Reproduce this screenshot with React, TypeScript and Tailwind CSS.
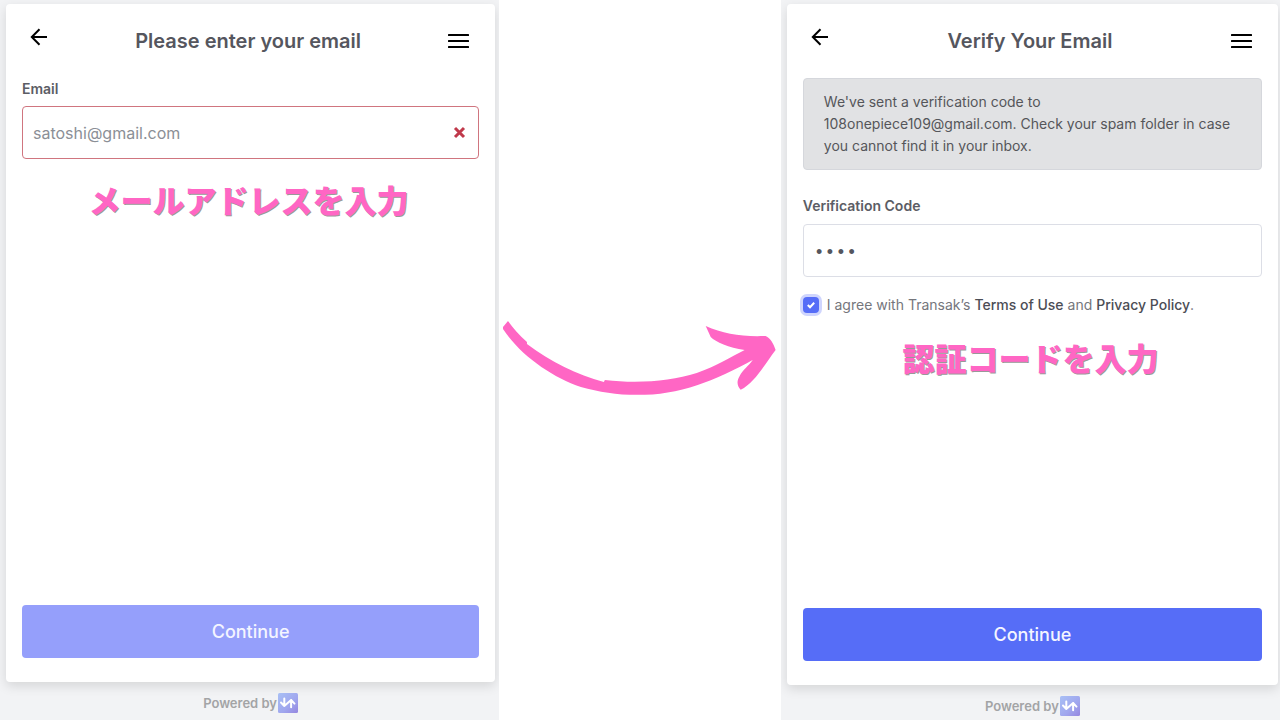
import { ReactNode, useState } from "react";

function BackButton() {
  return (
    <button type="button" aria-label="Back" className="-mt-2 cursor-pointer">
      <svg width="18" height="18" viewBox="0 0 18 18" fill="none" stroke="#000" strokeWidth="2">
        <path d="M17 9H2" />
        <path d="M9.5 1.2 1.8 9l7.7 7.8" />
      </svg>
    </button>
  );
}

function MenuButton() {
  return (
    <button type="button" aria-label="Menu" className="cursor-pointer">
      <svg width="21" height="16" viewBox="0 0 21 16" fill="#000">
        <rect y="1" width="21" height="2" rx="0.5" />
        <rect y="7" width="21" height="2" rx="0.5" />
        <rect y="13" width="21" height="2" rx="0.5" />
      </svg>
    </button>
  );
}

function PoweredBy() {
  return (
    <footer className="flex items-center justify-center gap-px pt-[11px] text-[13px] leading-5 font-semibold text-[#a3a4a6]">
      <span>Powered by</span>
      <svg width="20" height="20" viewBox="0 0 20 20" role="img" aria-label="Transak">
        <defs>
          <linearGradient id="badge" x1="0" y1="0" x2="1" y2="1">
            <stop offset="0" stopColor="#a9c0f5" />
            <stop offset="0.6" stopColor="#a0a6ee" />
            <stop offset="1" stopColor="#9586df" />
          </linearGradient>
        </defs>
        <rect width="20" height="20" rx="1.5" fill="url(#badge)" />
        <path
          d="M3 9.5 6.3 13l6.8-6 3.4 3.6M6.3 5.5V13M13.1 7v7.3"
          fill="none"
          stroke="#fff"
          strokeWidth="2"
          strokeLinecap="round"
          strokeLinejoin="round"
        />
      </svg>
    </footer>
  );
}

function Caption({ children }: { children: ReactNode }) {
  return (
    <p className="pr-1 text-center font-['Noto_Sans_CJK_JP',sans-serif] text-[32px] leading-10 font-black text-[#ff66c4] [text-shadow:1px_1px_0_#999]">
      {children}
    </p>
  );
}

function Card({ title, children }: { title: string; children: ReactNode }) {
  return (
    <main className="flex flex-1 flex-col rounded bg-white px-4 pb-6 shadow-[0_4px_12px_rgba(0,0,0,0.12)]">
      <header className="flex h-[74px] items-center justify-between pr-2.5 pl-2">
        <BackButton />
        <h1 className="text-xl font-semibold text-[#55565e]">{title}</h1>
        <MenuButton />
      </header>
      {children}
    </main>
  );
}

export default function App() {
  const [email, setEmail] = useState("");
  const [code, setCode] = useState("1234");
  const [agreed, setAgreed] = useState(true);

  return (
    <div className="grid min-h-screen grid-cols-[39fr_22fr_39fr] bg-white font-['Inter','Noto_Sans_CJK_JP',sans-serif]">
      <section className="flex flex-col overflow-hidden bg-[#f2f3f5] pt-1 pr-1 pb-[7px] pl-1.5">
        <Card title="Please enter your email">
          <label htmlFor="email" className="text-sm leading-[22px] font-semibold text-[#5c5d65]">
            Email
          </label>
          <div className="mt-1.5 flex h-[53px] items-center rounded border border-[#d0757f] pr-3 pl-2.5">
            <input
              id="email"
              type="email"
              value={email}
              onChange={(e) => setEmail(e.target.value)}
              placeholder="satoshi@gmail.com"
              className="min-w-0 flex-1 text-base text-[#55565e] outline-none placeholder:text-[#8b8f96]"
            />
            <svg width="13" height="13" viewBox="0 0 13 13" stroke="#c0394b" strokeWidth="3">
              <path d="m2 2 9 9M11 2l-9 9" />
            </svg>
          </div>
          <div className="mt-5">
            <Caption>メールアドレスを入力</Caption>
          </div>
          <button
            type="button"
            className="mt-auto h-[53px] rounded bg-[#959ffb] text-lg font-medium text-[#f4f5ff]"
          >
            Continue
          </button>
        </Card>
        <PoweredBy />
      </section>

      <div className="flex items-center pb-2.5">
        <svg
          viewBox="0 0 282 110"
          className="w-full"
          fill="#ff66c4"
          role="img"
          aria-label="Next step"
        >
          <path d="M4 27 9 21C14 28 20 35 28 42L28 44C52 62 78 75 105 82L106 80C140 84 172 81 198 73C218 66 232 57 246 50C230 48 217 42 212 37L207 26C225 34 244 37 267 36C272 38 275 44 277 50C265 66 256 83 242 90C238 85 238 81 241 76C244 70 250 66 254 60C238 69 215 80 199 85C178 92 160 95 138 95C118 95 100 92 82 87C53 77 22 56 4 29Z" />
        </svg>
      </div>

      <section className="flex flex-col overflow-hidden bg-[#f2f3f5] pt-1 pr-0.5 pb-1 pl-1.5">
        <Card title="Verify Your Email">
          <p className="rounded border border-[#d5d7dc] bg-[#e1e2e4] py-3 pr-7 pl-5 text-sm leading-[22px] text-[#55565a]">
            We've sent a verification code to 108onepiece109@gmail.com. Check your spam folder in
            case you cannot find it in your inbox.
          </p>
          <label htmlFor="code" className="mt-6 text-sm leading-6 font-semibold text-[#5c5d65]">
            Verification Code
          </label>
          <input
            id="code"
            type="password"
            value={code}
            onChange={(e) => setCode(e.target.value)}
            className="mt-1.5 h-[53px] rounded border border-[#dcdee6] px-2.5 pt-1 font-['Liberation_Mono',monospace] text-lg text-[#55565e] outline-none"
          />
          <div className="mt-4 flex items-center gap-2 text-sm leading-6 text-[#75767c]">
            <span className="grid place-items-center">
              <input
                id="agree"
                type="checkbox"
                checked={agreed}
                onChange={(e) => setAgreed(e.target.checked)}
                className="col-start-1 row-start-1 size-4 appearance-none rounded ring-3 ring-[#cfd5fd] checked:bg-[#566df7]"
              />
              {agreed && (
                <svg
                  width="8"
                  height="8"
                  viewBox="0 0 8 8"
                  fill="none"
                  stroke="#fff"
                  strokeWidth="2"
                  className="pointer-events-none col-start-1 row-start-1"
                >
                  <path d="m0.8 4 2.2 2.2L7.2 1.8" />
                </svg>
              )}
            </span>
            <label htmlFor="agree">
              I agree with Transak’s{" "}
              <a href="#terms" className="font-medium text-[#4c4d55]">
                Terms of Use
              </a>{" "}
              and{" "}
              <a href="#privacy" className="font-medium text-[#4c4d55]">
                Privacy Policy
              </a>
              .
            </label>
          </div>
          <div className="mt-5">
            <Caption>認証コードを入力</Caption>
          </div>
          <button
            type="button"
            className="mt-auto h-[53px] rounded bg-[#566df7] text-lg font-medium text-[#f4f5ff]"
          >
            Continue
          </button>
        </Card>
        <PoweredBy />
      </section>
    </div>
  );
}
